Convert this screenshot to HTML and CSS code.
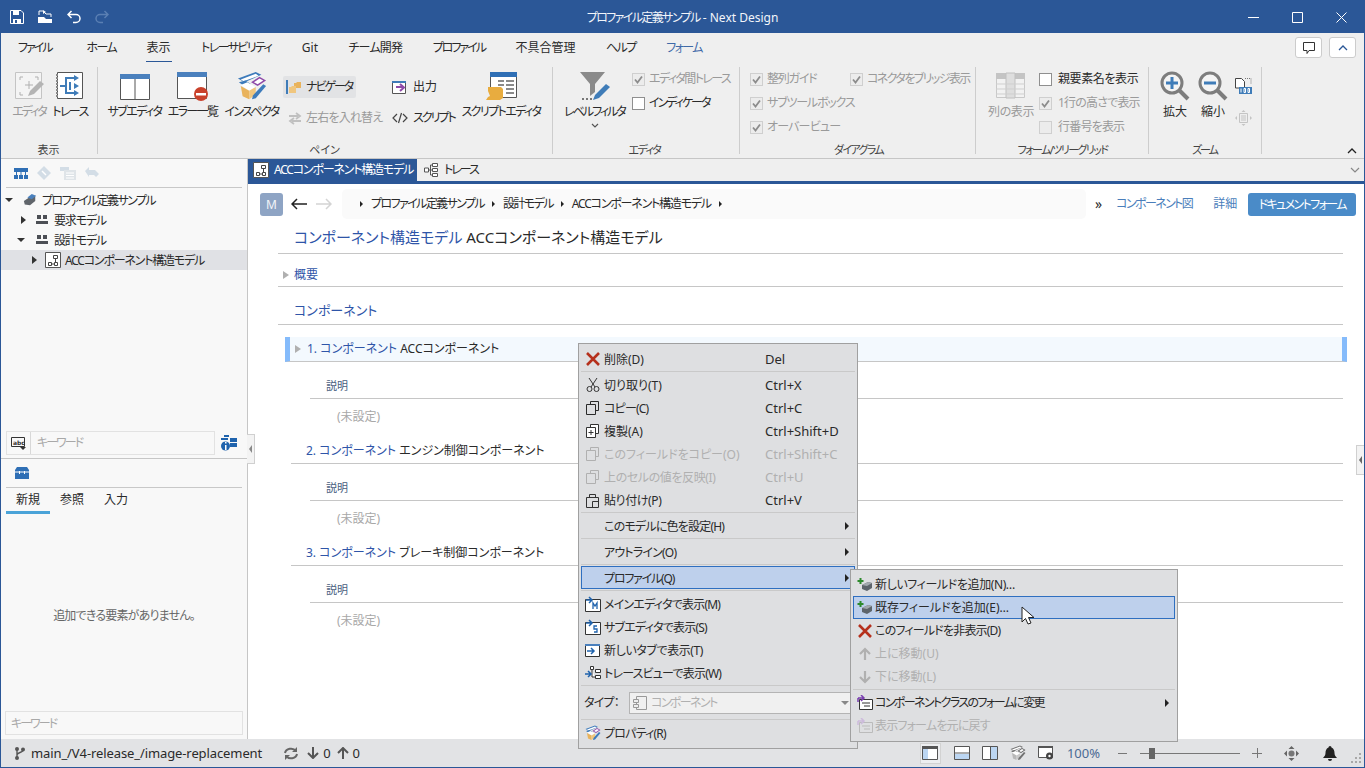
FILE: index.html
```html
<!DOCTYPE html>
<html lang="ja">
<head>
    <meta charset="UTF-8">
    <meta name="viewport" content="width=device-width, initial-scale=1.0">
    <title>プロファイル定義サンプル - Next Design</title>
    <link rel="stylesheet" href="styles.css">
</head>
<body>
<svg class="defs" width="0" height="0">
    <symbol id="i-x" viewBox="0 0 16 16"><path d="M2 2l12 12M14 2L2 14" stroke="#b5301c" stroke-width="2.6" fill="none"/></symbol>
    <symbol id="i-copy" viewBox="0 0 16 16"><path d="M5.500 4.500V1.500h8v9h-3M1.500 4.500h9v10h-9z" fill="none" stroke="currentColor"/></symbol>
    <symbol id="i-add" viewBox="0 0 16 16"><path d="M5 8l6-3 4 1v5l-5 3-5-2z" fill="#5d646b"/><path d="M5 8l6-3 4 1-5 3z" fill="#a3a9ae"/><path d="M3.500 1v6M.500 4h6" stroke="#2d8a2d" stroke-width="2"/></symbol>
    <symbol id="i-group" viewBox="0 0 12 10"><path d="M1 0h4v4H1zM7 0h4v4H7zM0 6h12v3H0z" fill="#4c4f55"/></symbol>
    <symbol id="i-diagram" viewBox="0 0 16 16"><path d="M.500.500h15v15H.500z" fill="#fff" stroke="#555"/><path d="M8.500 3.500h4v3h-4zM3.500 10.500h3v3h-3zM9.500 10.500h3v3h-3zM10.500 6.500v4M6.500 12h3" fill="none" stroke="#444"/></symbol>
    <symbol id="i-inspect" viewBox="0 0 32 32"><path d="M1 8L20 1l6 3L8 12z" fill="#3d7bbb"/><path d="M4 9L20 3l3 2L7 11z" fill="#fff"/><path d="M15 12l9-6 7 4-9 6z" fill="#8e4aa8"/><path d="M18 12l6-4 4 2-6 4z" fill="#fff"/><path d="M2 12l7-2 6 4-6 3z" fill="#3d7bbb"/><path d="M4 15l7-3 9 5-7 4z" fill="#fff"/><path d="M4 16l9 5v9l-7-3z" fill="#e9b35c"/><path d="M13 21l7-4 0 8-7 5z" fill="#f0c67e"/><path d="M16 30l1-4L28 14l3 2L20 29z" fill="#3d7bbb"/></symbol>
    <symbol id="i-cb" viewBox="0 0 13 13"><path d="M3 6.500l2.500 3L10 3.500" fill="none" stroke="#8c8c8c" stroke-width="1.800"/></symbol>
</svg>

<div class="app">
    <header class="titlebar">
        <div class="qat">
            <svg width="14" height="14" viewBox="0 0 14 14"><path d="M.500.500h10.500l2.500 2.500v10.500h-13z" fill="none" stroke="#fff"/><path d="M3 1h6v4H3zM3 9h8v5H3z" fill="#fff"/><path d="M5 10h2v3H5z" fill="#2b5797"/></svg>
            <svg width="15" height="14" viewBox="0 0 15 14"><path d="M0 7h6l2 2h6v4H0z" fill="#fff"/><path d="M1 5V1h4l3 3h5v3" fill="none" stroke="#fff"/><path d="M5 0l3 2-3 2z" fill="#fff"/></svg>
            <svg width="14" height="14" viewBox="0 0 14 14"><path d="M1 4.500h8a4 4 0 0 1 0 8H6M4.500 1L1 4.500 4.500 8" fill="none" stroke="#fff" stroke-width="1.500"/></svg>
            <svg width="14" height="14" viewBox="0 0 14 14"><path d="M13 4.500H5a4 4 0 0 0 0 8h3M9.500 1L13 4.500 9.500 8" fill="none" stroke="#5a7fb3" stroke-width="1.500"/></svg>
        </div>
        <div class="app-title"><span class="ls-16">プロファイル定義サンプル</span> - Next Design</div>
        <div class="win-btns">
            <svg width="11" height="11" viewBox="0 0 11 11"><path d="M0 5.500h11" stroke="#fff"/></svg>
            <svg width="11" height="11" viewBox="0 0 11 11"><path d="M.500.500h10v10H.500z" fill="none" stroke="#fff"/></svg>
            <svg width="11" height="11" viewBox="0 0 11 11"><path d="M.500.500l10 10M10.500.500l-10 10" stroke="#fff"/></svg>
        </div>
    </header>

    <nav class="ribbon-tabs">
        <span class="rtab ls-20">ファイル</span>
        <span class="rtab home-tab ls-16">ホーム</span>
        <span class="rtab active">表示</span>
        <span class="rtab ls-16">トレーサビリティ</span>
        <span class="rtab">Git</span>
        <span class="rtab ls-08">チーム開発</span>
        <span class="rtab ls-20">プロファイル</span>
        <span class="rtab">不具合管理</span>
        <span class="rtab ls-16">ヘルプ</span>
        <span class="rtab form-tab ls-16">フォーム</span>
        <div class="rtab-right">
            <button class="mini-btn"><svg width="14" height="14" viewBox="0 0 14 14"><path d="M1.500 1.500h11v8H7l-2 3v-3H1.500z" fill="none" stroke="#333"/></svg></button>
            <button class="mini-btn"><svg width="10" height="6" viewBox="0 0 10 6"><path d="M1 5l4-4 4 4" fill="none" stroke="#2b5797" stroke-width="1.300"/></svg></button>
        </div>
    </nav>

    <section class="ribbon">
        <div class="group g-view">
            <div class="group-body">
                <div class="big-btn dim w42">
                    <svg width="30" height="30" viewBox="0 0 30 30"><path d="M1.500 1.500h26v26h-26z" fill="#f4f4f4" stroke="#c4c4c4"/><path d="M6 9V6h3M21 6h3v3M6 21v3h3" fill="none" stroke="#b0b0b0"/><path d="M15 10v8M11 14h8" stroke="#b0b0b0"/><path d="M14 25l2-5 10-10 4 3-10 10z" fill="#b4b4b4"/></svg>
                    <span class="ls-20">エディタ</span>
                </div>
                <div class="big-btn w40">
                    <svg width="28" height="30" viewBox="0 0 28 30"><path d="M1.500 1.500h25v26h-25z" fill="#fff" stroke="#555"/><path d="M1 3v24" stroke="#888" stroke-dasharray="2 1" stroke-width="2"/><path d="M4 15h6V7h8M10 15v7h8M14 11v8" fill="none" stroke="#3f7cb8" stroke-width="2"/><path d="M18 4l5 3-5 3zM18 12l5 3-5 3zM18 19l5 3-5 3z" fill="#3f7cb8"/></svg>
                    <span class="ls-16">トレース</span>
                </div>
            </div>
            <div class="group-label">表示</div>
        </div>

        <div class="group g-pane">
            <div class="group-body">
                <div class="big-btn w59">
                    <svg width="30" height="30" viewBox="0 0 30 30"><path d="M.500 3.500h29v25H.500zM15 8v20" fill="#fff" stroke="#555"/><path d="M0 3h30v5H0z" fill="#4a80bd"/></svg>
                    <span class="ls-16">サブエディタ</span>
                </div>
                <div class="big-btn w57">
                    <svg width="32" height="30" viewBox="0 0 32 30"><path d="M.500 1.500h29v26H.500z" fill="#fff" stroke="#555"/><path d="M0 1h30v5H0z" fill="#4a80bd"/><circle cx="24" cy="23" r="7" fill="#c9412b"/><path d="M19 22h10v2.500H19z" fill="#fff"/></svg>
                    <span class="ls-16">エラー一覧</span>
                </div>
                <div class="big-btn w61">
                    <svg width="32" height="30" viewBox="0 0 32 32"><use href="#i-inspect"/></svg>
                    <span class="ls-16">インスペクタ</span>
                </div>
                <div class="col-small c-nav">
                    <div class="small-item nav-on">
                        <svg width="16" height="16" viewBox="0 0 16 16"><path d="M0 1h2v14H0z" fill="#3f7cb8"/><path d="M8 4h2l1-1h4v6H8z" fill="#e9b35c"/><path d="M3 8h2l1-1h4v7H3z" fill="#f0c67e"/></svg>
                        <span class="ls-20">ナビゲータ</span>
                    </div>
                    <div class="small-item dim swap">
                        <svg width="14" height="14" viewBox="0 0 14 14"><path d="M1 5h9M8 2l4 3-4 3M13 10H4M6 7l-4 3 4 3" fill="none" stroke="#c0c0c0" stroke-width="1.800"/></svg>
                        <span class="ls-08">左右を入れ替え</span>
                    </div>
                </div>
                <div class="col-small c-out">
                    <div class="small-item">
                        <svg width="16" height="14" viewBox="0 0 16 14"><path d="M.500 1.500h13v12H.500z" fill="#fff" stroke="#555"/><path d="M0 1h14v2H0z" fill="#3f7cb8"/><path d="M4 7h7M8 4l4 3.500L8 11" fill="none" stroke="#8e4aa8" stroke-width="2"/></svg>
                        <span>出力</span>
                    </div>
                    <div class="small-item">
                        <svg width="16" height="14" viewBox="0 0 16 14"><path d="M5 3L1 7l4 4M11 3l4 4-4 4M9.500 2l-3 10" fill="none" stroke="#444" stroke-width="1.200"/></svg>
                        <span class="ls-20">スクリプト</span>
                    </div>
                </div>
                <div class="big-btn w84">
                    <svg width="32" height="30" viewBox="0 0 32 30"><path d="M5.500 1.500h26v25h-26z" fill="#fff" stroke="#555"/><path d="M5 1h27v5H5z" fill="#2f6fb5"/><path d="M13 9h6v2h-6zM21 9h8v2h-8zM13 13h6v2h-6zM21 13h8v2h-8zM21 17h8v2h-8zM21 21h8v2h-8z" fill="#8a8a8a"/><path d="M3 16h13l2 2v9l-3 2H1l2-3 2-1-2-5z" fill="#e8ac3f"/></svg>
                    <span class="ls-16">スクリプトエディタ</span>
                </div>
            </div>
            <div class="group-label">ペイン</div>
        </div>

        <div class="group g-editor">
            <div class="group-body">
                <div class="big-btn w73">
                    <svg width="32" height="30" viewBox="0 0 32 30"><path d="M1 1h25L16 13v8l-5 4V13z" fill="#8a8a8a"/><path d="M3 27h2v2H3zM7 27h2v2H7zM11 27h2v2h-2z" fill="#777"/><path d="M14 29l2-5 11-11 4 3-11 11z" fill="#3f7cb8"/></svg>
                    <span class="ls-20">レベルフィルタ</span>
                    <svg class="chev" width="8" height="5" viewBox="0 0 8 5"><path d="M1 1l3 3 3-3" fill="none" stroke="#555" stroke-width="1.200"/></svg>
                </div>
                <div class="col-checks c-ed">
                    <div class="chk-row dim"><span class="chk off"><svg width="13" height="13"><use href="#i-cb"/></svg></span><span class="ls-16">エディタ間トレース</span></div>
                    <div class="chk-row"><span class="chk"></span><span class="ls-20">インディケータ</span></div>
                </div>
            </div>
            <div class="group-label ls-16">エディタ</div>
        </div>

        <div class="group g-diagram">
            <div class="group-body">
                <div class="col-checks c-dia">
                    <div class="chk-row dim"><span class="chk off"><svg width="13" height="13"><use href="#i-cb"/></svg></span><span class="ls-12">整列ガイド</span></div>
                    <div class="chk-row dim"><span class="chk off"><svg width="13" height="13"><use href="#i-cb"/></svg></span><span class="ls-12">サブツールボックス</span></div>
                    <div class="chk-row dim"><span class="chk off"><svg width="13" height="13"><use href="#i-cb"/></svg></span><span class="ls-08">オーバービュー</span></div>
                </div>
                <div class="col-checks">
                    <div class="chk-row dim"><span class="chk off"><svg width="13" height="13"><use href="#i-cb"/></svg></span><span class="ls-16">コネクタをブリッジ表示</span></div>
                </div>
            </div>
            <div class="group-label ls-16">ダイアグラム</div>
        </div>

        <div class="group g-form">
            <div class="group-body">
                <div class="big-btn dim w52">
                    <svg width="30" height="28" viewBox="0 0 30 28"><path d="M.500 1.500h28v24H.500z" fill="#f2f2f2" stroke="#c8c8c8"/><path d="M0 1h29v6H0z" fill="#c4c4c4"/><path d="M10 1h9v25h-9z" fill="#dedede" stroke="#c0c0c0"/><path d="M0 12h29M0 17h29M0 22h29" stroke="#cfcfcf"/></svg>
                    <span class="ls-04">列の表示</span>
                </div>
                <div class="col-checks c-frm">
                    <div class="chk-row"><span class="chk"></span><span class="ls-04">親要素名を表示</span></div>
                    <div class="chk-row dim"><span class="chk off"><svg width="13" height="13"><use href="#i-cb"/></svg></span><span class="ls-08">1行の高さで表示</span></div>
                    <div class="chk-row dim"><span class="chk off"></span><span class="ls-08">行番号を表示</span></div>
                </div>
            </div>
            <div class="group-label ls-16">フォーム/ツリーグリッド</div>
        </div>

        <div class="group g-zoom">
            <div class="group-body">
                <div class="big-btn w38">
                    <svg width="30" height="30" viewBox="0 0 30 30"><circle cx="12" cy="12" r="10" fill="#f4f4f4" stroke="#7d7d7d" stroke-width="3"/><path d="M19 19l9 9" stroke="#7d7d7d" stroke-width="4"/><path d="M12 6v12M6 12h12" stroke="#3f7cb8" stroke-width="3"/></svg>
                    <span>拡大</span>
                </div>
                <div class="big-btn w38">
                    <svg width="30" height="30" viewBox="0 0 30 30"><circle cx="12" cy="12" r="10" fill="#f4f4f4" stroke="#7d7d7d" stroke-width="3"/><path d="M19 19l9 9" stroke="#7d7d7d" stroke-width="4"/><path d="M6 12h12" stroke="#3f7cb8" stroke-width="3"/></svg>
                    <span>縮小</span>
                </div>
                <div class="col-icons">
                    <svg width="17" height="16" viewBox="0 0 17 16"><path d="M.500.500h6l3 3V10H.500z" fill="#fff" stroke="#444"/><path d="M10 .500h6v5" fill="none" stroke="#777" stroke-dasharray="1 1"/><path d="M4 9h13v7H4z" fill="#3f7cb8"/><path d="M6 10.500v4M9 10.500h1.500v4H9zM13 10.500h1.500v4H13z" fill="none" stroke="#fff"/></svg>
                    <svg width="17" height="16" viewBox="0 0 17 16"><path d="M4.500 3.500h8v9h-8z" fill="#eee" stroke="#c4c4c4"/><path d="M6 6h5M6 8h5M6 10h5" stroke="#c4c4c4"/><path d="M8.500 0l2 2h-4zM8.500 16l2-2h-4zM0 8l2-2v4zM17 8l-2-2v4z" fill="#c4c4c4"/></svg>
                </div>
            </div>
            <div class="group-label ls-20">ズーム</div>
        </div>
        <svg class="ribbon-collapse" width="10" height="6" viewBox="0 0 10 6"><path d="M1 5l4-4 4 4" fill="none" stroke="#222" stroke-width="1.300"/></svg>
    </section>

    <div class="workspace">
        <aside class="side">
            <div class="side-tools">
                <svg width="14" height="11" viewBox="0 0 14 11"><path d="M0 0h14v4H0zM0 7h4v4H0zM5 7h4v4H5zM10 7h4v4h-4zM2 4h1v3H2zM6.500 4h1v3h-1zM11 4h1v3h-1z" fill="#2f6fb5"/></svg>
                <svg width="14" height="14" viewBox="0 0 14 14"><path d="M7 0l7 7-7 7-7-7z" fill="#d3dde6"/><path d="M5 5l4 4" stroke="#fff" stroke-width="1.500"/></svg>
                <svg width="16" height="13" viewBox="0 0 16 13"><path d="M0 0h9v4H0z" fill="#d3dde6"/><path d="M4 3h12v10H4z" fill="#dfe4e8"/><path d="M6 6h8M6 8.500h8M6 11h8" stroke="#fff"/></svg>
                <svg width="15" height="13" viewBox="0 0 15 13"><path d="M0 4l4-4v3h6l4 4-3 3-2-2H4v2z" fill="#d3dde6"/></svg>
            </div>
            <ul class="tree">
                <li class="row lv0">
                    <i class="tri-d"></i>
                    <svg width="16" height="14" viewBox="0 0 16 16"><path d="M1 9l6-4 7-2v6l-6 5-6-1z" fill="#60656b"/><path d="M5 5l5-4 5 2-5 4z" fill="#4a80bd"/></svg>
                    <span class="ls-16">プロファイル定義サンプル</span>
                </li>
                <li class="row lv1">
                    <i class="tri-r"></i>
                    <svg width="12" height="10"><use href="#i-group"/></svg>
                    <span class="ls-12">要求モデル</span>
                </li>
                <li class="row lv1b">
                    <i class="tri-d"></i>
                    <svg width="12" height="10"><use href="#i-group"/></svg>
                    <span class="ls-12">設計モデル</span>
                </li>
                <li class="row lv2 selected">
                    <i class="tri-r"></i>
                    <svg width="16" height="16"><use href="#i-diagram"/></svg>
                    <span class="ls-12">ACCコンポーネント構造モデル</span>
                </li>
            </ul>
            <div class="filter-row">
                <div class="filter-box">
                    <span class="abc"><svg width="16" height="13" viewBox="0 0 16 13"><path d="M.500.500h13v9H.500z" fill="none" stroke="#333"/><text x="2" y="8" class="abc-txt">abc</text><path d="M9 10h6l-3 3z" fill="#333"/></svg></span>
                    <span class="ph ls-20">キーワード</span>
                </div>
                <svg width="16" height="16" viewBox="0 0 16 16"><path d="M3 0h5v2H3zM0 3h7v2H0zM9 3h7v4H9zM9 8h7v4H9z" fill="#1f63ad"/><circle cx="4.500" cy="11" r="4.500" fill="#1f63ad"/><path d="M4 7h1.500v1.500H4zM4 10h1.500v5H4z" fill="#fff"/></svg>
            </div>
            <div class="toolbox">
                <div class="toolbox-head">
                    <svg width="14" height="12" viewBox="0 0 14 12"><path d="M2 0h10l2 3v9H0V3z" fill="#2f6fb5"/><path d="M0 5h14" stroke="#fff"/><path d="M4 4h1v3H4zM9 4h1v3H9z" fill="#fff"/></svg>
                </div>
                <div class="toolbox-tabs">
                    <span class="ttab active">新規</span>
                    <span class="ttab">参照</span>
                    <span class="ttab">入力</span>
                </div>
                <div class="empty"><span class="ls-08">追加できる要素がありません。</span></div>
                <div class="keyword"><span class="ls-20">キーワード</span></div>
            </div>
        </aside>

        <main class="main">
            <div class="doc-tabs">
                <div class="dtab active">
                    <svg width="16" height="16"><use href="#i-diagram"/></svg>
                    <span class="ls-12">ACCコンポーネント構造モデル</span>
                </div>
                <div class="dtab">
                    <svg width="14" height="14" viewBox="0 0 14 14"><path d="M.500 5h4v4h-4zM8.500.500h5v3h-5zM8.500 5.500h5v3h-5zM8.500 10.500h5v3h-5zM4.500 7h4M6.500 2v10h2M6.500 2h2" fill="#fff" stroke="#555"/></svg>
                    <span class="ls-20">トレース</span>
                </div>
                <svg class="tabs-chev" width="10" height="6" viewBox="0 0 10 6"><path d="M1 1l4 4 4-4" fill="none" stroke="#888" stroke-width="1.200"/></svg>
            </div>
            <div class="doc">
                <div class="doc-nav">
                    <span class="avatar">M</span>
                    <svg class="arrow" width="16" height="12" viewBox="0 0 16 12"><path d="M16 6H1M6 1L1 6l5 5" fill="none" stroke="#222" stroke-width="1.500"/></svg>
                    <svg class="arrow" width="16" height="12" viewBox="0 0 16 12"><path d="M0 6h15M10 1l5 5-5 5" fill="none" stroke="#d4d4d4" stroke-width="1.500"/></svg>
                    <div class="crumbs">
                        <i class="tri-s"></i><span class="ls-16">プロファイル定義サンプル</span>
                        <i class="tri-s"></i><span class="ls-16">設計モデル</span>
                        <i class="tri-s"></i><span class="ls-12">ACCコンポーネント構造モデル</span>
                        <i class="tri-s"></i>
                    </div>
                    <span class="more">»</span>
                    <span class="link l1 ls-16">コンポーネント図</span>
                    <span class="link l2">詳細</span>
                    <span class="doc-btn"><span class="ls-16">ドキュメントフォーム</span></span>
                </div>

                <div class="sheet">
                    <h1 class="sheet-title"><span class="blue">コンポーネント構造モデル</span> ACCコンポーネント構造モデル</h1>
                    <div class="summary"><i class="tri-g"></i><span class="blue">概要</span></div>
                    <h2 class="section"><span class="blue">コンポーネント</span></h2>

                    <div class="item-head current">
                        <i class="tri-g"></i><span class="blue">1. コンポーネント</span>&nbsp;ACCコンポーネント
                    </div>
                    <div class="field">説明</div>
                    <div class="value">(未設定)</div>

                    <div class="item-head"><span class="blue">2. コンポーネント</span>&nbsp;エンジン制御コンポーネント</div>
                    <div class="field">説明</div>
                    <div class="value">(未設定)</div>

                    <div class="item-head"><span class="blue">3. コンポーネント</span>&nbsp;ブレーキ制御コンポーネント</div>
                    <div class="field">説明</div>
                    <div class="value">(未設定)</div>
                </div>
            </div>
        </main>
    </div>

    <footer class="statusbar">
        <svg class="st-branch" width="10" height="13" viewBox="0 0 10 13"><circle cx="2" cy="2" r="2" fill="#555"/><circle cx="2" cy="11" r="2" fill="#555"/><circle cx="8" cy="2.500" r="2" fill="#555"/><path d="M2 2v9M8 3c0 3-6 2-6 5" fill="none" stroke="#555" stroke-width="1.400"/></svg>
        <span class="st-text">main_/V4-release_/image-replacement</span>
        <svg class="st-sync" width="14" height="13" viewBox="0 0 14 13"><path d="M1 6a6 5 0 0 1 11-2M13 7a6 5 0 0 1-11 2" fill="none" stroke="#666" stroke-width="2"/><path d="M13 0v5H8zM1 13V8h5z" fill="#666"/></svg>
        <svg class="st-down" width="12" height="12" viewBox="0 0 12 12"><path d="M6 0v11M1 6l5 5 5-5" fill="none" stroke="#555" stroke-width="2"/></svg>
        <span class="st-num">0</span>
        <svg class="st-up" width="12" height="12" viewBox="0 0 12 12"><path d="M6 12V1M1 6l5-5 5 5" fill="none" stroke="#555" stroke-width="2"/></svg>
        <span class="st-num">0</span>

        <div class="st-right">
            <span class="st-ic on"><svg width="16" height="14" viewBox="0 0 16 14"><path d="M.500.500h15v13H.500z" fill="#fff" stroke="#555"/><path d="M1 3h5v10H1z" fill="#bcd6f2"/><path d="M0 0h16v3H0z" fill="#555"/></svg></span>
            <span class="st-ic"><svg width="16" height="14" viewBox="0 0 16 14"><path d="M.500.500h15v13H.500z" fill="#fff" stroke="#555"/><path d="M1 8h14v5H1z" fill="#bcd6f2"/><path d="M0 7h16" stroke="#555"/></svg></span>
            <span class="st-ic"><svg width="16" height="14" viewBox="0 0 16 14"><path d="M.500.500h15v13H.500z" fill="#fff" stroke="#555"/><path d="M9 1h6v12H9z" fill="#bcd6f2"/><path d="M8.500 0v14" stroke="#555"/></svg></span>
            <span class="st-ic gray"><svg width="16" height="16" viewBox="0 0 32 32"><use href="#i-inspect"/></svg></span>
            <span class="st-ic"><svg width="16" height="14" viewBox="0 0 16 14"><path d="M.500.500h14v11H.500z" fill="#fff" stroke="#555"/><path d="M0 0h15v2H0z" fill="#555"/><circle cx="11.500" cy="10" r="3.500" fill="#444"/><circle cx="11.500" cy="10" r="1.200" fill="#fff"/></svg></span>
            <span class="st-zoom">100%</span>
            <span class="st-minus"></span>
            <span class="st-slider"><i></i></span>
            <span class="st-plus"></span>
            <svg class="st-move" width="15" height="15" viewBox="0 0 15 15"><path d="M7.500 0l3 3h-6zM7.500 15l3-3h-6zM0 7.500l3-3v6zM15 7.500l-3-3v6z" fill="#666"/><circle cx="7.500" cy="7.500" r="3" fill="#777"/></svg>
            <svg class="st-bell" width="14" height="15" viewBox="0 0 14 15"><path d="M7 0a1.500 1.500 0 0 1 1.500 1.500C11 2.500 11.500 5 11.500 7c0 2 1 3.500 2.500 5H0c1.500-1.500 2.500-3 2.500-5 0-2 .5-4.500 3-5.500A1.500 1.500 0 0 1 7 0zM5 13h4a2 2 0 0 1-4 0z" fill="#222"/></svg>
            <svg class="st-grip" width="12" height="12" viewBox="0 0 12 12"><path d="M9 1h2v2H9zM5 5h2v2H5zM9 5h2v2H9zM1 9h2v2H1zM5 9h2v2H5zM9 9h2v2H9z" fill="#a8a8a8"/></svg>
        </div>
    </footer>

    <div class="handle h-left"><i></i></div>
    <div class="handle h-right"><i></i></div>

    <div class="menu ctx">
        <div class="mi"><svg width="16" height="16"><use href="#i-x"/></svg><span class="ml">削除(D)</span><span class="sc">Del</span></div>
        <hr>
        <div class="mi"><svg width="14" height="14" viewBox="0 0 14 14"><path d="M3 0l6 9M11 0L5 9" fill="none" stroke="#333"/><circle cx="3.500" cy="11" r="2.500" fill="none" stroke="#333"/><circle cx="10.500" cy="11" r="2.500" fill="none" stroke="#333"/></svg><span class="ml">切り取り(T)</span><span class="sc">Ctrl+X</span></div>
        <div class="mi"><svg width="16" height="16"><use href="#i-copy"/></svg><span class="ml ls-08">コピー(C)</span><span class="sc">Ctrl+C</span></div>
        <div class="mi"><svg width="16" height="16" viewBox="0 0 16 16"><path d="M5.500 4.500V1.500h8v9h-3M1.500 4.500h9v10h-9z" fill="#fff" stroke="#333"/><path d="M6 7v5M3.500 9.500h5" stroke="#333"/></svg><span class="ml">複製(A)</span><span class="sc">Ctrl+Shift+D</span></div>
        <div class="mi off"><svg width="16" height="16"><use href="#i-copy"/></svg><span class="ml">このフィールドをコピー(O)</span><span class="sc">Ctrl+Shift+C</span></div>
        <div class="mi off"><svg width="16" height="16"><use href="#i-copy"/></svg><span class="ml ls-04">上のセルの値を反映(I)</span><span class="sc">Ctrl+U</span></div>
        <div class="mi"><svg width="16" height="16" viewBox="0 0 16 16"><path d="M1.500 5.500h12v10h-12zM4.500 5.500V2.500h6v3" fill="none" stroke="#333"/><path d="M7.500 9.500h6M7.500 9.500v6" stroke="#333"/></svg><span class="ml ls-04">貼り付け(P)</span><span class="sc">Ctrl+V</span></div>
        <hr>
        <div class="mi"><i class="mi-blank"></i><span class="ml ls-08">このモデルに色を設定(H)</span><i class="tri-m"></i></div>
        <hr>
        <div class="mi"><i class="mi-blank"></i><span class="ml ls-08">アウトライン(O)</span><i class="tri-m"></i></div>
        <hr>
        <div class="mi hl"><i class="mi-blank"></i><span class="ml ls-12">プロファイル(Q)</span><i class="tri-m"></i></div>
        <hr>
        <div class="mi"><svg width="16" height="16" viewBox="0 0 16 16"><path d="M.500 3.500h15v12H.500z" fill="#fff" stroke="#333"/><path d="M1 4h5M4 1l3 3-3 3" fill="none" stroke="#1f63ad" stroke-width="1.500"/><path d="M8 13V7l2 3 2-3v6" fill="none" stroke="#1f63ad" stroke-width="1.300"/></svg><span class="ml ls-08">メインエディタで表示(M)</span></div>
        <div class="mi"><svg width="16" height="16" viewBox="0 0 16 16"><path d="M.500 3.500h15v12H.500z" fill="#fff" stroke="#333"/><path d="M1 4h5M4 1l3 3-3 3" fill="none" stroke="#1f63ad" stroke-width="1.500"/><path d="M12 7H9v3h3v3H9" fill="none" stroke="#1f63ad" stroke-width="1.300"/></svg><span class="ml ls-08">サブエディタで表示(S)</span></div>
        <div class="mi"><svg width="16" height="16" viewBox="0 0 16 16"><path d="M.500 2.500h14v12H.500z" fill="#fff" stroke="#333"/><path d="M0 2h15v2H0z" fill="#4a80bd"/><path d="M2 9h7M6 6l3 3-3 3" fill="none" stroke="#1f63ad" stroke-width="1.500"/></svg><span class="ml ls-04">新しいタブで表示(T)</span></div>
        <div class="mi"><svg width="16" height="16" viewBox="0 0 16 16"><path d="M5.500 1.500h3v3h-3zM10.500 4.500h5v3h-5zM10.500 10.500h5v3h-5zM7 5v7h3" fill="#fff" stroke="#333"/><path d="M0 9h5M3 6l3 3-3 3" fill="none" stroke="#1f63ad" stroke-width="1.500"/></svg><span class="ml ls-08">トレースビューで表示(W)</span></div>
        <hr>
        <div class="mi-type">
            <span class="type-lbl ls-08">タイプ：</span>
            <div class="combo">
                <svg width="16" height="16" viewBox="0 0 16 16"><path d="M4.500 1.500h10v13h-10z" fill="none" stroke="#999"/><path d="M1.500 4.500h5v3h-5zM1.500 9.500h5v3h-5z" fill="#eee" stroke="#999"/></svg>
                <span class="combo-txt ls-16">コンポーネント</span>
                <i class="combo-arrow"></i>
            </div>
        </div>
        <hr>
        <div class="mi"><svg width="16" height="16" viewBox="0 0 32 32"><use href="#i-inspect"/></svg><span class="ml ls-08">プロパティ(R)</span></div>
    </div>

    <div class="menu sub">
        <div class="mi"><svg width="16" height="16"><use href="#i-add"/></svg><span class="ml ls-04">新しいフィールドを追加(N)…</span></div>
        <div class="mi hl"><svg width="16" height="16"><use href="#i-add"/></svg><span class="ml">既存フィールドを追加(E)…</span></div>
        <div class="mi"><svg width="16" height="16"><use href="#i-x"/></svg><span class="ml ls-08">このフィールドを非表示(D)</span></div>
        <div class="mi off"><svg width="16" height="16" viewBox="0 0 16 16"><path d="M8 14V3M3 8l5-5 5 5" fill="none" stroke="currentColor" stroke-width="2.200"/></svg><span class="ml">上に移動(U)</span></div>
        <div class="mi off"><svg width="16" height="16" viewBox="0 0 16 16"><path d="M8 2v11M3 8l5 5 5-5" fill="none" stroke="currentColor" stroke-width="2.200"/></svg><span class="ml">下に移動(L)</span></div>
        <hr>
        <div class="mi"><svg width="16" height="16" viewBox="0 0 16 16"><path d="M2.500 4.500h13v10h-13z" fill="#fff" stroke="#333"/><path d="M5 8h8M7 11h6" stroke="#333"/><path d="M1 3h5M4 0l3 3-3 3M1 3v4" fill="none" stroke="#7a3fb0" stroke-width="1.500"/></svg><span class="ml ls-16">コンポーネントクラスのフォームに変更</span><i class="tri-m"></i></div>
        <div class="mi off"><svg width="16" height="16" viewBox="0 0 16 16"><path d="M2.500 4.500h13v10h-13z" fill="none" stroke="#bbb"/><path d="M5 8h8M7 11h6" stroke="#bbb"/><path d="M1 3h5M4 0l3 3-3 3M1 3v4" fill="none" stroke="#cdbbdc" stroke-width="1.500"/></svg><span class="ml ls-08">表示フォームを元に戻す</span></div>
    </div>

    <svg class="cursor" width="14" height="20" viewBox="0 0 14 20"><path d="M1 1v15l3.500-3.500L7 18l3-1-2.500-5.500H13z" fill="#fff" stroke="#222"/></svg>
</div>
</body>
</html>
```

FILE: styles.css
```css
* {
    box-sizing: border-box;
}
html, body {
    margin: 0;
    height: 100%;
    overflow: hidden;
}
body {
    font-family: "Noto Sans", "Noto Sans CJK JP", sans-serif;
    font-feature-settings: "palt";
    font-size: 12px;
    line-height: 16px;
    color: #2a2a2a;
    background: #fff;
}
svg {
    display: block;
    flex: none;
}
.defs {
    position: absolute;
}
/* the original UI font has narrow kana, these pull the text in */
.ls-04 { letter-spacing: -0.4px; }
.ls-08 { letter-spacing: -0.8px; }
.ls-12 { letter-spacing: -1.2px; }
.ls-16 { letter-spacing: -1.6px; }
.ls-20 { letter-spacing: -2px; }
.app {
    position: relative;
    width: 1365px;
    height: 768px;
    border: 1px solid #2b5797;
    display: flex;
    flex-direction: column;
}

/* title bar */
.titlebar {
    height: 32px;
    background: #2b5797;
    display: flex;
    align-items: center;
    position: relative;
    color: #fff;
}
.qat {
    display: flex;
    gap: 14px;
    padding-left: 9px;
}
.app-title {
    position: absolute;
    left: 0;
    right: 0;
    padding-top: 2px;
    text-align: center;
    color: #f2f5fa;
}
.win-btns {
    margin-left: auto;
    display: flex;
    gap: 33px;
    padding-right: 17px;
}

/* ribbon */
.ribbon-tabs {
    height: 29px;
    background: #efefef;
    display: flex;
    align-items: center;
    padding-left: 17px;
    gap: 30.5px;
}
.rtab {
    position: relative;
    white-space: nowrap;
}
.home-tab {
    margin-left: 4.5px;
}
.rtab.active::after {
    content: "";
    position: absolute;
    left: -1px;
    right: -1px;
    top: 21px;
    height: 3px;
    background: #2b5797;
}
.form-tab {
    color: #3f6aa8;
}
.rtab-right {
    margin-left: auto;
    display: flex;
    gap: 7px;
    padding-right: 8px;
}
.mini-btn {
    width: 27px;
    height: 21px;
    background: #fff;
    border: 1px solid #ccc;
    border-radius: 3px;
    padding: 0;
    display: flex;
    align-items: center;
    justify-content: center;
}
.ribbon {
    height: 97px;
    background: #efefef;
    border-bottom: 1px solid #c6c6c6;
    padding: 5px 0 4px;
    display: flex;
    position: relative;
}
.group {
    height: 87px;
    border-right: 1px solid #cdcdcd;
    display: flex;
    flex-direction: column;
}
.group-body {
    flex: 1;
    display: flex;
    min-height: 0;
}
.group-label {
    text-align: center;
    margin-bottom: -4px;
    margin-left: -8px;
    font-size: 11px;
    color: #444;
}
.g-view { width: 97px; padding-left: 7px; }
.g-pane { width: 455px; padding-left: 7px; }
.g-editor { width: 187px; padding-left: 5px; }
.g-diagram { width: 236px; padding-left: 10px; }
.g-form { width: 173px; padding-left: 9px; }
.g-zoom { width: 113px; padding-left: 7px; }
.big-btn {
    display: flex;
    flex-direction: column;
    align-items: center;
    padding-top: 4px;
    white-space: nowrap;
}
.big-btn span {
    margin-top: 3px;
}
.big-btn svg:first-child {
    height: 30px;
}
.w38 { width: 38px; }
.w40 { width: 40px; }
.w42 { width: 42px; }
.w52 { width: 52px; }
.w57 { width: 57px; }
.w59 { width: 59px; }
.w61 { width: 61px; }
.w73 { width: 73px; }
.w84 { width: 84px; }
.chev {
    margin-top: 3px;
}
.dim {
    color: #9a9a9a;
}
.col-small {
    display: flex;
    flex-direction: column;
    gap: 9px;
    padding-top: 9px;
}
.c-nav { width: 106px; margin-left: 1px; }
.c-out { width: 67px; margin-left: 3px; }
.small-item {
    height: 22px;
    display: flex;
    align-items: center;
    gap: 5px;
    white-space: nowrap;
}
.nav-on {
    width: 73px;
    background: #e2e3e5;
    border-radius: 2px;
    padding-left: 3px;
    gap: 4px;
}
.swap {
    padding-left: 5px;
    gap: 4px;
}
.c-ed { margin-left: 1px; }
.c-dia { width: 100px; }
.c-frm { margin-left: 2px; }
.c-frm .chk-row { gap: 6px; }
.chk-row {
    height: 24px;
    display: flex;
    align-items: center;
    gap: 4px;
    white-space: nowrap;
}
.chk {
    width: 13px;
    height: 13px;
    border: 1px solid #8f8f8f;
    background: #fff;
    flex: none;
}
.chk svg {
    margin: -1px;
}
.chk.off {
    border-color: #cfcfcf;
    background: #ececec;
}
.col-icons {
    display: flex;
    flex-direction: column;
    gap: 16px;
    padding: 11px 0 0 3px;
}
.ribbon-collapse {
    position: absolute;
    right: 7px;
    top: 86px;
}

/* workspace */
.workspace {
    flex: 1;
    min-height: 0;
    display: flex;
}
.side {
    width: 247px;
    background: #f8f8f8;
    border-right: 1px solid #c6c6c6;
    display: flex;
    flex-direction: column;
}
.side-tools {
    height: 29px;
    margin: 0 5px;
    border-bottom: 1px solid #c8c8c8;
    display: flex;
    align-items: center;
    gap: 9px;
    padding-left: 8px;
}
.tree {
    flex: 1;
    list-style: none;
    margin: 2px 0 0;
    padding: 0;
}
.row {
    height: 20px;
    display: flex;
    align-items: center;
    white-space: nowrap;
}
.row span {
    margin-left: 4px;
    padding-top: 2px;
}
.lv0 { padding-left: 4px; }
.lv0 svg { margin-left: 9px; }
.lv1 { padding-left: 20px; }
.lv1 svg { margin-left: 10px; }
.lv1 span, .lv1b span { margin-left: 6px; }
.lv1b { padding-left: 16px; }
.lv1b svg { margin-left: 11px; }
.lv2 { padding-left: 31px; }
.lv2 svg { margin-left: 8px; }
.selected {
    background: #e0e1e5;
}
.tri-d {
    width: 0;
    height: 0;
    border-left: 4px solid transparent;
    border-right: 4px solid transparent;
    border-top: 4px solid #333;
}
.tri-r {
    width: 0;
    height: 0;
    border-top: 4px solid transparent;
    border-bottom: 4px solid transparent;
    border-left: 5px solid #333;
}
.filter-row {
    height: 31px;
    display: flex;
    align-items: center;
    padding: 0 10px 0 5px;
    border-bottom: 1px solid #c6c6c6;
    justify-content: space-between;
}
.filter-box {
    width: 209px;
    height: 24px;
    border: 1px solid #e2e2e2;
    display: flex;
    align-items: center;
}
.abc {
    width: 24px;
    height: 22px;
    border-right: 1px solid #d8d8d8;
    display: flex;
    align-items: center;
    padding-left: 4px;
}
.abc-txt {
    font-family: "DejaVu Sans", sans-serif;
    font-size: 6px;
    font-weight: 700;
    fill: #333;
}
.ph {
    margin-left: 6px;
    color: #a8a8a8;
}
.toolbox {
    height: 280px;
    display: flex;
    flex-direction: column;
}
.toolbox-head {
    height: 29px;
    margin: 0 5px;
    border-bottom: 1px solid #c8c8c8;
    display: flex;
    align-items: center;
    padding-left: 9px;
}
.toolbox-tabs {
    height: 26px;
    padding-left: 5px;
    display: flex;
}
.ttab {
    width: 44px;
    text-align: center;
    line-height: 24px;
}
.ttab.active {
    border-bottom: 3px solid #4aa3d8;
}
.empty {
    flex: 1;
    display: flex;
    align-items: center;
    justify-content: center;
    padding: 7px 0 0 0;
    color: #666;
}
.keyword {
    height: 24px;
    margin: 0 4px 4px;
    border: 1px solid #e2e2e2;
    padding-left: 5px;
    line-height: 24px;
    color: #a8a8a8;
}

/* main area */
.main {
    flex: 1;
    min-width: 0;
    display: flex;
    flex-direction: column;
}
.doc-tabs {
    height: 25px;
    background: #efefef;
    border-bottom: 3px solid #2b5797;
    display: flex;
    position: relative;
}
.dtab {
    display: flex;
    align-items: center;
    gap: 6px;
    padding: 0 7px;
    white-space: nowrap;
}
.dtab.active {
    width: 169px;
    background: #2b5797;
    color: #fff;
    padding: 0 5px;
    gap: 5px;
}
.tabs-chev {
    position: absolute;
    right: 4px;
    top: 8px;
}
.doc {
    flex: 1;
    min-height: 0;
    padding-top: 5px;
}
.doc-nav {
    height: 30px;
    display: flex;
    align-items: center;
    padding-left: 12px;
}
.avatar {
    width: 23px;
    height: 23px;
    background: #8ea4c4;
    border-radius: 3px;
    color: #f2f4f8;
    text-align: center;
    line-height: 23px;
}
.arrow {
    margin-left: 8px;
    margin-right: 1px;
}
.arrow + .arrow {
    margin-left: 8px;
    margin-right: 0;
}
.crumbs {
    width: 744px;
    height: 30px;
    margin-left: 10px;
    background: #fafafa;
    border-radius: 5px;
    display: flex;
    align-items: center;
    padding-left: 18px;
    gap: 8px;
    white-space: nowrap;
}
.tri-s {
    width: 0;
    height: 0;
    border-top: 3px solid transparent;
    border-bottom: 3px solid transparent;
    border-left: 3px solid #222;
}
.more {
    margin-left: 9px;
    font-size: 14px;
}
.link {
    color: #4a7ebb;
    white-space: nowrap;
}
.l1 { margin-left: 14px; }
.l2 { margin-left: 21px; }
.doc-btn {
    margin-left: 11px;
    width: 108px;
    height: 23px;
    background: #4a8bc8;
    border-radius: 3px;
    color: #fff;
    text-align: center;
    line-height: 23px;
    white-space: nowrap;
}
.sheet {
    margin-left: 30px;
    width: 1065px;
}
.blue {
    color: #2f55a8;
}
.sheet-title {
    margin: 0;
    height: 35px;
    padding: 9px 0 0 16px;
    border-bottom: 1px solid #c6c6c6;
    font-size: 15px;
    font-weight: 400;
    line-height: 18px;
}
.summary {
    height: 33px;
    padding-top: 13px;
    border-bottom: 1px solid #c6c6c6;
    display: flex;
    align-items: flex-start;
    white-space: nowrap;
}
.tri-g {
    width: 0;
    height: 0;
    margin: 4px 5px 0 5px;
    border-top: 4px solid transparent;
    border-bottom: 4px solid transparent;
    border-left: 6px solid #b0b0b0;
}
.section {
    margin: 0;
    height: 38px;
    padding: 15px 0 0 16px;
    border-bottom: 1px solid #c6c6c6;
    font-size: 13px;
    font-weight: 400;
}
.item-head {
    margin-left: 13px;
    height: 27px;
    padding: 6px 0 0 15px;
    border-bottom: 1px solid #c6c6c6;
    white-space: nowrap;
}
.item-head.current {
    margin: 12px -4px 0 7px;
    height: 25px;
    padding: 4px 0 0 5px;
    display: flex;
    background: #f3f9fe;
    border-left: 5px solid #85bbfb;
    border-right: 5px solid #85bbfb;
}
.item-head.current .tri-g {
    margin: 4px 6px 0 0;
}
.field {
    height: 37px;
    margin-left: 32px;
    padding: 16px 0 0 16px;
    border-bottom: 1px solid #c6c6c6;
    font-size: 11px;
    color: #4a5e80;
}
.value {
    height: 38px;
    padding: 10px 0 0 59px;
    color: #a8a8a8;
}

/* status bar */
.statusbar {
    height: 28px;
    background: #e2e3e5;
    display: flex;
    align-items: center;
    padding-left: 14px;
    white-space: nowrap;
}
.st-text {
    margin-left: 6px;
    font-size: 13px;
    letter-spacing: -0.1px;
}
.st-sync { margin-left: 22px; }
.st-down { margin-left: 9px; }
.st-up { margin-left: 6px; }
.st-num {
    margin-left: 4px;
    font-size: 13px;
}
.st-right {
    margin-left: auto;
    display: flex;
    align-items: center;
    padding-right: 2px;
}
.st-ic {
    width: 28px;
    height: 21px;
    display: flex;
    align-items: center;
    justify-content: center;
}
.st-ic.on {
    width: 21px;
    margin-right: 7px;
    background: #edeef0;
    border: 1px solid #d2d2d2;
}
.st-ic.gray svg {
    filter: grayscale(1);
}
.st-zoom {
    margin-left: 7px;
    font-size: 13px;
    color: #4a6a94;
}
.st-minus {
    width: 9px;
    height: 1px;
    margin-left: 18px;
    background: #777;
}
.st-slider {
    width: 100px;
    height: 1px;
    margin-left: 13px;
    background: #777;
    position: relative;
}
.st-slider i {
    position: absolute;
    left: 9px;
    top: -5px;
    width: 6px;
    height: 11px;
    background: #666;
}
.st-plus {
    width: 10px;
    height: 10px;
    margin-left: 12px;
    background: linear-gradient(#777, #777) center / 10px 1px no-repeat,
                linear-gradient(#777, #777) center / 1px 10px no-repeat;
}
.st-move { margin-left: 22px; }
.st-bell { margin-left: 24px; }
.st-grip { margin-left: 13px; align-self: flex-end; }

/* overlays */
.handle {
    position: absolute;
    width: 8px;
    height: 30px;
    background: #f3f3f3;
    border: 1px solid #d0d0d0;
    display: flex;
    align-items: center;
    justify-content: center;
}
.handle i {
    width: 0;
    height: 0;
    border-top: 4px solid transparent;
    border-bottom: 4px solid transparent;
}
.h-left {
    left: 246px;
    top: 433px;
    border-left: 0;
}
.h-left i {
    border-right: 3px solid #888;
}
.h-right {
    left: 1355px;
    top: 444px;
    border-right: 0;
}
.h-right i {
    border-right: 3px solid #666;
}
.menu {
    position: absolute;
    background: #dedfe1;
    border: 1px solid #a0a0a0;
    padding: 3px 2px;
    white-space: nowrap;
}
.menu hr {
    border: 0;
    height: 1px;
    background: #c9c9c9;
    margin: 1px 0 1px 0;
}
.mi {
    height: 23px;
    display: flex;
    align-items: center;
    padding-left: 3px;
    border: 1px solid transparent;
}
.mi > svg,
.mi-blank {
    width: 16px;
    margin-right: 3px;
    flex: none;
}
.ml {
    width: 161px;
    padding-top: 2px;
}
.sc {
    font-size: 13px;
}
.mi.off {
    color: #b0b0b0;
}
.mi.hl {
    background: #bed0ec;
    border-color: #2f6fc0;
}
.tri-m {
    width: 0;
    height: 0;
    margin-left: auto;
    margin-right: 5px;
    border-top: 4px solid transparent;
    border-bottom: 4px solid transparent;
    border-left: 4px solid #222;
}
.ctx {
    left: 577px;
    top: 342px;
    width: 280px;
    height: 406px;
}
.sub {
    left: 849px;
    top: 568px;
    width: 328px;
    height: 173px;
}
.sub .mi > svg {
    margin-right: 2px;
}
.sub .ml {
    width: auto;
    padding-top: 0;
}
.mi-type {
    height: 31px;
    display: flex;
    align-items: center;
    padding-left: 3px;
}
.type-lbl {
    width: 45px;
}
.combo {
    width: 224px;
    height: 22px;
    background: #f0f0f0;
    border: 1px solid #b4b4b4;
    display: flex;
    align-items: center;
    padding-left: 2px;
}
.combo-txt {
    margin-left: 3px;
    color: #b0b0b0;
}
.combo-arrow {
    width: 0;
    height: 0;
    margin-left: auto;
    margin-right: 3px;
    border-left: 4px solid transparent;
    border-right: 4px solid transparent;
    border-top: 4px solid #888;
}
.cursor {
    position: absolute;
    left: 1020px;
    top: 605px;
}
```
